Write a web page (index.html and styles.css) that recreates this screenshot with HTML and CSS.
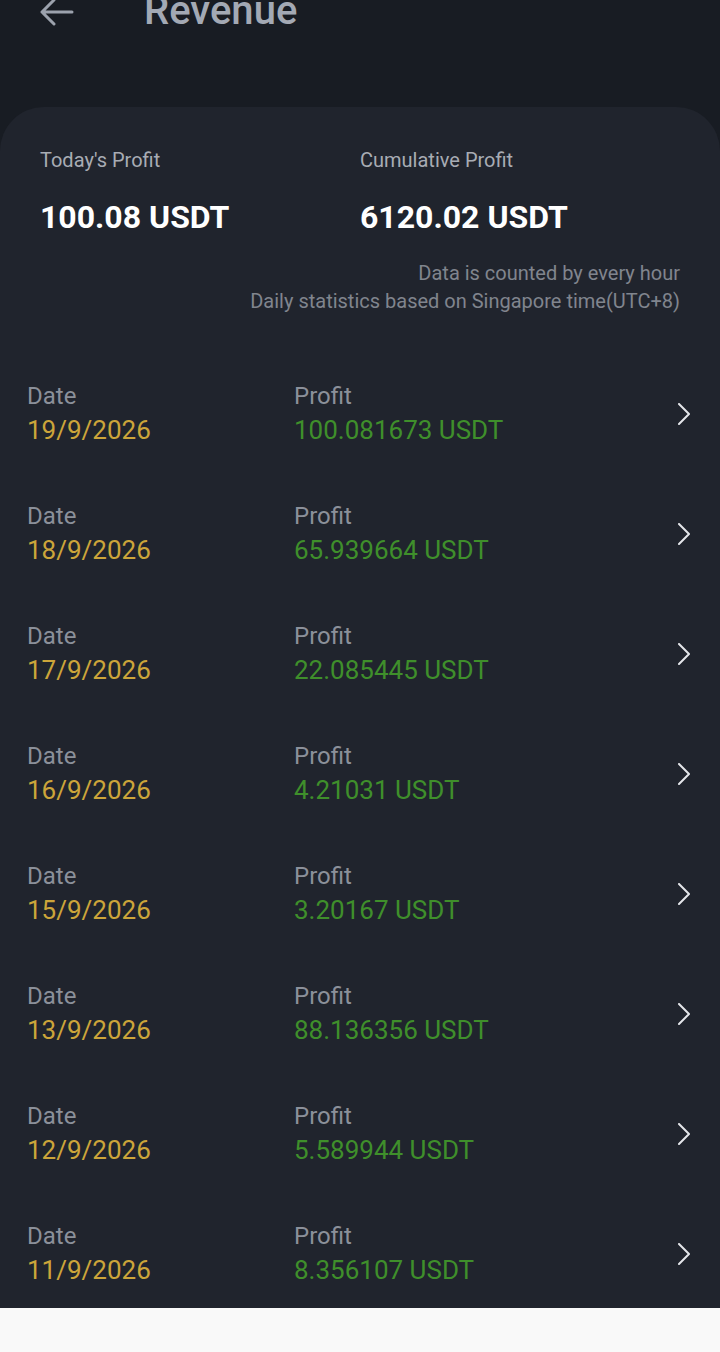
FILE: index.html
```html
<!DOCTYPE html>
<html lang="en">
<head>
    <meta charset="UTF-8">
    <meta name="viewport" content="width=device-width, initial-scale=1.0">
    <title>Revenue</title>
    <link rel="stylesheet" href="styles.css">
</head>
<body>
    <div class="page">
        <header class="top-bar">
            <svg class="back-icon" width="36" height="36" viewBox="0 0 36 36" fill="none" stroke="currentColor" stroke-width="3" stroke-linecap="round" stroke-linejoin="round">
                <path d="M33 13 H3 M15 1 L3 13 L15 25"/>
            </svg>
            <h1 class="title">Revenue</h1>
        </header>

        <div class="card">
            <div class="summary">
                <div class="summary-item">
                    <div class="summary-label">Today's Profit</div>
                    <div class="summary-value">100.08 USDT</div>
                </div>
                <div class="summary-item">
                    <div class="summary-label">Cumulative Profit</div>
                    <div class="summary-value">6120.02 USDT</div>
                </div>
            </div>
            <div class="notes">
                <p>Data is counted by every hour</p>
                <p>Daily statistics based on Singapore time(UTC+8)</p>
            </div>

            <div class="record-list">
                <div class="record">
                    <div class="col col-date"><span class="label">Date</span><span class="date">19/9/2026</span></div>
                    <div class="col"><span class="label">Profit</span><span class="profit">100.081673 USDT</span></div>
                    <svg class="chevron" viewBox="0 0 12 22" fill="none" stroke="currentColor" stroke-width="2" stroke-linecap="round" stroke-linejoin="round"><path d="M1 1 L11 11 L1 21"/></svg>
                </div>
                <div class="record">
                    <div class="col col-date"><span class="label">Date</span><span class="date">18/9/2026</span></div>
                    <div class="col"><span class="label">Profit</span><span class="profit">65.939664 USDT</span></div>
                    <svg class="chevron" viewBox="0 0 12 22" fill="none" stroke="currentColor" stroke-width="2" stroke-linecap="round" stroke-linejoin="round"><path d="M1 1 L11 11 L1 21"/></svg>
                </div>
                <div class="record">
                    <div class="col col-date"><span class="label">Date</span><span class="date">17/9/2026</span></div>
                    <div class="col"><span class="label">Profit</span><span class="profit">22.085445 USDT</span></div>
                    <svg class="chevron" viewBox="0 0 12 22" fill="none" stroke="currentColor" stroke-width="2" stroke-linecap="round" stroke-linejoin="round"><path d="M1 1 L11 11 L1 21"/></svg>
                </div>
                <div class="record">
                    <div class="col col-date"><span class="label">Date</span><span class="date">16/9/2026</span></div>
                    <div class="col"><span class="label">Profit</span><span class="profit">4.21031 USDT</span></div>
                    <svg class="chevron" viewBox="0 0 12 22" fill="none" stroke="currentColor" stroke-width="2" stroke-linecap="round" stroke-linejoin="round"><path d="M1 1 L11 11 L1 21"/></svg>
                </div>
                <div class="record">
                    <div class="col col-date"><span class="label">Date</span><span class="date">15/9/2026</span></div>
                    <div class="col"><span class="label">Profit</span><span class="profit">3.20167 USDT</span></div>
                    <svg class="chevron" viewBox="0 0 12 22" fill="none" stroke="currentColor" stroke-width="2" stroke-linecap="round" stroke-linejoin="round"><path d="M1 1 L11 11 L1 21"/></svg>
                </div>
                <div class="record">
                    <div class="col col-date"><span class="label">Date</span><span class="date">13/9/2026</span></div>
                    <div class="col"><span class="label">Profit</span><span class="profit">88.136356 USDT</span></div>
                    <svg class="chevron" viewBox="0 0 12 22" fill="none" stroke="currentColor" stroke-width="2" stroke-linecap="round" stroke-linejoin="round"><path d="M1 1 L11 11 L1 21"/></svg>
                </div>
                <div class="record">
                    <div class="col col-date"><span class="label">Date</span><span class="date">12/9/2026</span></div>
                    <div class="col"><span class="label">Profit</span><span class="profit">5.589944 USDT</span></div>
                    <svg class="chevron" viewBox="0 0 12 22" fill="none" stroke="currentColor" stroke-width="2" stroke-linecap="round" stroke-linejoin="round"><path d="M1 1 L11 11 L1 21"/></svg>
                </div>
                <div class="record">
                    <div class="col col-date"><span class="label">Date</span><span class="date">11/9/2026</span></div>
                    <div class="col"><span class="label">Profit</span><span class="profit">8.356107 USDT</span></div>
                    <svg class="chevron" viewBox="0 0 12 22" fill="none" stroke="currentColor" stroke-width="2" stroke-linecap="round" stroke-linejoin="round"><path d="M1 1 L11 11 L1 21"/></svg>
                </div>
            </div>
        </div>
    </div>
</body>
</html>
```

FILE: styles.css
```css
body {
    margin: 0;
    font-family: 'Roboto', 'Liberation Sans', sans-serif;
    background-color: #f9f9f9;
}
.page {
    background-color: #181c23;
    overflow: hidden;
}
.top-bar {
    height: 107px;
    display: flex;
    align-items: flex-start;
    padding-left: 39px;
    box-sizing: border-box;
}
.back-icon {
    color: #9ca2ad;
    margin-top: -1px;
    flex: none;
}
.title {
    margin: -9px 0 0 69px;
    font-size: 40px;
    line-height: 40px;
    font-weight: 500;
    color: #a3a9b4;
}
.card {
    background-color: #20242d;
    border-radius: 44px 44px 0 0;
    padding-bottom: 22px;
}
.summary {
    display: grid;
    grid-template-columns: 320px 1fr;
    padding: 41px 0 0 40px;
}
.summary-label {
    font-size: 20px;
    line-height: 24px;
    color: #a8acb4;
}
.summary-value {
    margin-top: 26px;
    font-size: 32px;
    line-height: 38px;
    font-weight: 700;
    color: #ffffff;
}
.notes {
    margin-top: 23px;
    padding-right: 40px;
    text-align: right;
    font-size: 20px;
    line-height: 28px;
    color: #80858e;
}
.notes p {
    margin: 0;
}
.record-list {
    display: flex;
    flex-direction: column;
    gap: 55px;
    padding-top: 66px;
}
.record {
    display: flex;
    align-items: center;
    padding: 0 30px 0 27px;
}
.col {
    display: flex;
    flex-direction: column;
    gap: 3px;
    flex: 1;
}
.col-date {
    flex: none;
    width: 267px;
}
.label {
    font-size: 24px;
    line-height: 30px;
    color: #8b909a;
}
.date,
.profit {
    font-size: 26px;
    line-height: 32px;
}
.date {
    color: #cca53a;
}
.profit {
    color: #3f8f2b;
}
.chevron {
    width: 12px;
    height: 22px;
    color: #e4e6ea;
    flex: none;
}
```
